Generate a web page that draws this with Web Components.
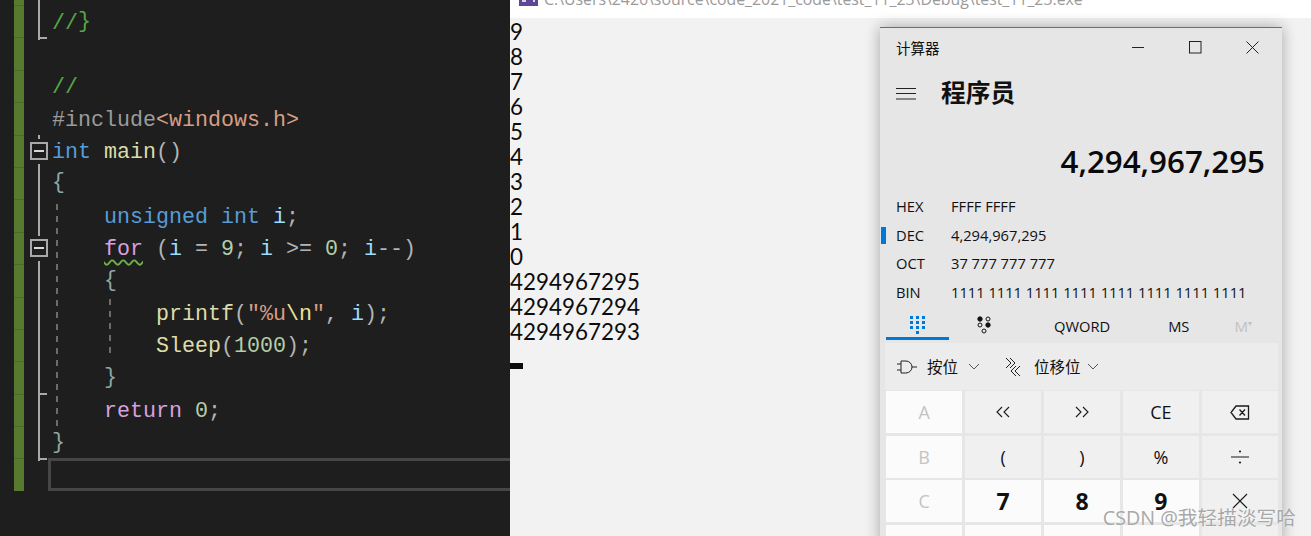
<!DOCTYPE html>
<html lang="zh">
<head>
<meta charset="utf-8">
<title>calc</title>
<style>
  html,body{margin:0;height:100%;overflow:hidden;background:#1e1e1e}
</style>
</head>
<body>
<desk-top>
  <code-editor>
    <code-line fold="line" short></code-line>
    <code-line fold="end"><c-t k="com">//</c-t><c-t k="com" brace>}</c-t></code-line>
    <code-line></code-line>
    <code-line><c-t k="com">//</c-t></code-line>
    <code-line><c-t k="pre">#include</c-t><c-t k="str">&lt;windows.h&gt;</c-t></code-line>
    <code-line fold="box"><c-t k="kw">int</c-t> <c-t k="fn">main</c-t><c-t k="pun">()</c-t></code-line>
    <code-line fold="line"><c-t k="brace" brace>{</c-t></code-line>
    <code-line fold="line">    <c-t k="kw">unsigned</c-t> <c-t k="kw">int</c-t> <c-t k="var">i</c-t><c-t k="pun">;</c-t></code-line>
    <code-line fold="box">    <c-t k="ctl" squiggle>for</c-t><c-t k="pun"> (</c-t><c-t k="var">i</c-t><c-t k="pun"> = </c-t><c-t k="num">9</c-t><c-t k="pun">; </c-t><c-t k="var">i</c-t><c-t k="pun"> &gt;= </c-t><c-t k="num">0</c-t><c-t k="pun">; </c-t><c-t k="var">i</c-t><c-t k="pun">--)</c-t></code-line>
    <code-line fold="line">    <c-t k="brace" brace>{</c-t></code-line>
    <code-line fold="line">        <c-t k="fn">printf</c-t><c-t k="pun">(</c-t><c-t k="str">"%u</c-t><c-t k="esc">\n</c-t><c-t k="str">"</c-t><c-t k="pun">, </c-t><c-t k="var">i</c-t><c-t k="pun">);</c-t></code-line>
    <code-line fold="line">        <c-t k="fn">Sleep</c-t><c-t k="pun">(</c-t><c-t k="num">1000</c-t><c-t k="pun">);</c-t></code-line>
    <code-line fold="end">    <c-t k="brace" brace>}</c-t></code-line>
    <code-line fold="line">    <c-t k="ctl">return</c-t> <c-t k="num">0</c-t><c-t k="pun">;</c-t></code-line>
    <code-line fold="end"><c-t k="brace" brace>}</c-t></code-line>
    <code-line current></code-line>
  </code-editor>
  <console-pane><span slot="title">C:\Users\2426\source\code_2021_code\test_11_23\Debug\test_11_23.exe</span>9
8
7
6
5
4
3
2
1
0
4294967295
4294967294
4294967293</console-pane>
  <calc-window>
    <radix-row slot="radix" name="HEX">FFFF FFFF</radix-row>
    <radix-row slot="radix" name="DEC" active>4,294,967,295</radix-row>
    <radix-row slot="radix" name="OCT">37 777 777 777</radix-row>
    <radix-row slot="radix" name="BIN">1111 1111 1111 1111 1111 1111 1111 1111</radix-row>
    <calc-key kind="off">A</calc-key>
    <calc-key kind="op"><svg width="16" height="12" viewBox="0 0 16 12" fill="none" stroke="#1a1a1a" stroke-width="1.1"><path d="M7 1 2 6l5 5M14 1 9 6l5 5"/></svg></calc-key>
    <calc-key kind="op"><svg width="16" height="12" viewBox="0 0 16 12" fill="none" stroke="#1a1a1a" stroke-width="1.1"><path d="M2 1l5 5-5 5M9 1l5 5-5 5"/></svg></calc-key>
    <calc-key kind="op">CE</calc-key>
    <calc-key kind="op"><svg width="20" height="15" viewBox="0 0 20 15" fill="none" stroke="#1a1a1a" stroke-width="1.3"><path d="M6 1h12.5v13H6L1 7.5zM9.5 4.5l5.5 6M15 4.5l-5.5 6"/></svg></calc-key>
    <calc-key kind="off">B</calc-key>
    <calc-key kind="op">(</calc-key>
    <calc-key kind="op">)</calc-key>
    <calc-key kind="op">%</calc-key>
    <calc-key kind="op"><svg width="18" height="16" viewBox="0 0 18 16" fill="#1a1a1a"><rect y="7.5" width="18" height="1"/><circle cx="9" cy="2.5" r="1.1"/><circle cx="9" cy="13.5" r="1.1"/></svg></calc-key>
    <calc-key kind="off">C</calc-key>
    <calc-key kind="num">7</calc-key>
    <calc-key kind="num">8</calc-key>
    <calc-key kind="num">9</calc-key>
    <calc-key kind="op"><svg width="16" height="16" viewBox="0 0 16 16" fill="none" stroke="#1a1a1a" stroke-width="1.1"><path d="M1 1l14 14M15 1 1 15"/></svg></calc-key>
    <calc-key kind="off"></calc-key>
    <calc-key kind="num"></calc-key>
    <calc-key kind="num"></calc-key>
    <calc-key kind="num"></calc-key>
    <calc-key kind="op"></calc-key>
  </calc-window>
  <water-mark>CSDN @我轻描淡写哈</water-mark>
</desk-top>

<script>
const css = { mono: '"Liberation Mono","DejaVu Sans Mono",monospace', ui: '"Open Sans","Noto Sans CJK SC",sans-serif' };

function shadow(el, html) {
  el.attachShadow({ mode: 'open' }).innerHTML = html;
}

class DeskTop extends HTMLElement {
  connectedCallback() {
    shadow(this, `<style>
      :host{display:flex;position:relative;width:1311px;height:536px;overflow:hidden}
    </style><slot></slot>`);
  }
}

// one coloured run of code
class CT extends HTMLElement {
  connectedCallback() {
    shadow(this, `<style>
      :host{color:#b4b4b4}
      :host([k=com]){color:#57a64a}
      :host([k=pre]){color:#9b9b9b}
      :host([k=str]){color:#d69d85}
      :host([k=esc]){color:#efe29a}
      :host([k=kw]){color:#569cd6}
      :host([k=ctl]){color:#d8a0df}
      :host([k=fn]){color:#dcdcaa}
      :host([k=var]){color:#9cdcfe}
      :host([k=num]){color:#b5cea8}
      :host([k=brace]){color:#8fa6a6}
      :host([brace]){line-height:0;vertical-align:2px}
      :host([squiggle]){text-decoration:underline wavy #6fb04a 1.5px;text-underline-offset:4px}
    </style><slot></slot>`);
  }
}

class CodeEditor extends HTMLElement {
  connectedCallback() {
    shadow(this, `<style>
      :host{display:block;position:relative;flex:none;width:510px;height:536px;overflow:hidden;background:#1e1e1e;
        font:21.67px/32.4px ${css.mono}}
      .guide{position:absolute;width:2px;background:repeating-linear-gradient(#6b6b6b 0 6px,transparent 6px 12px)}
      .g1{left:56px;top:204px;height:225px}
      .g2{left:109px;top:299px;height:58px}
    </style><slot></slot><i class="guide g1"></i><i class="guide g2"></i>`);
  }
}

class CodeLine extends HTMLElement {
  connectedCallback() {
    const fold = this.getAttribute('fold');
    const parts = {
      line: '<i class="v all"></i>',
      end: '<i class="v all"></i><i class="tick"></i>',
      box: '<i class="v top"></i><i class="v low"></i><b class="box"><i></i></b>'
    };
    shadow(this, `<style>
      :host{display:grid;grid-template-columns:14px 10px 28px 1fr;height:32.4px;white-space:pre}
      :host([short]){height:5px}
      .bar{grid-column:2;background:#587a2e;box-shadow:inset 0 1px 0 #4c6a2a}
      :host([short]) .bar{box-shadow:none}
      .fold{grid-column:3;position:relative}
      .v{position:absolute;left:14px;width:2px;background:#a9a9a9}
      .all{top:0;bottom:0}
      .top{top:0;height:4px}
      .low{top:29px;bottom:0}
      .tick{position:absolute;left:14px;bottom:1px;width:9px;height:2px;background:#a9a9a9}
      .box{position:absolute;left:6px;top:7px;width:14px;height:14px;border:2px solid #a9a9a9;display:flex;align-items:center;justify-content:center}
      .box i{width:10px;height:2px;background:#d6d6d6}
      .code{grid-column:4;min-width:0;padding-top:2.5px;box-sizing:border-box}
      :host([current]) .code{margin-left:-4px;margin-right:-20px;border:3px solid #464646;padding-top:0}
    </style><div class="bar"></div><div class="fold">${parts[fold] || ''}</div><div class="code"><slot></slot></div>`);
  }
}

class ConsolePane extends HTMLElement {
  connectedCallback() {
    shadow(this, `<style>
      :host{display:flex;flex-direction:column;flex:1;min-width:0;height:536px;background:#f2f2f2;color:#0c0c0c}
      .title{flex:none;height:18px;background:#fff;overflow:hidden;display:flex;align-items:flex-end;gap:6px;padding-left:9px;
        font:15.85px/24px ${css.ui};color:#9a9a9a;white-space:nowrap}
      .title svg{flex:none;margin-bottom:12px}
      .title div{margin-bottom:7px}
      pre{margin:0;padding-top:1px;font:22.4px/25px Lato,sans-serif}
      .cursor{width:13px;height:6px;background:#0c0c0c;margin-top:19px}
    </style>
    <div class="title"><svg width="19" height="18" viewBox="0 0 19 18"><rect width="19" height="18" fill="#5e4595"/><path d="M3 13h4M9 11h3M14 13h2" stroke="#d9d2e8" stroke-width="2"/></svg><div><slot name="title"></slot></div></div>
    <pre><slot></slot></pre><div class="cursor"></div>`);
  }
}

class RadixRow extends HTMLElement {
  connectedCallback() {
    shadow(this, `<style>
      :host{display:flex;align-items:center;height:28.5px;position:relative;padding-left:16px;font:14.7px/20px ${css.ui};color:#111}
      .n{width:55px}
      :host([active])::before{content:"";position:absolute;left:1px;top:6px;width:5px;height:17px;background:#0078d7}
    </style><span class="n">${this.getAttribute('name')}</span><slot></slot>`);
  }
}

class CalcKey extends HTMLElement {
  connectedCallback() {
    shadow(this, `<style>
      :host{display:flex;align-items:center;justify-content:center;height:42px;background:#f0f0f0;font:18px ${css.ui};color:#111}
      :host([kind=off]){background:#fbfbfb;color:#c4c4c4}
      :host([kind=num]){background:#fbfbfb;font-weight:700;font-size:23px}
    </style><slot></slot>`);
  }
}

class CalcWindow extends HTMLElement {
  connectedCallback() {
    shadow(this, `<style>
      :host{display:block;position:absolute;left:880px;top:27px;width:402px;height:520px;background:#e6e6e6;
        border-top:1px solid #6e6e6e;box-sizing:border-box;box-shadow:0 0 14px rgba(0,0,0,.32);font-family:${css.ui};color:#111}
      .cap{display:flex;align-items:center;height:39px;padding-left:16px;font-size:14.5px}
      .cap span{flex:1}
      .cap i{display:flex;width:57px;justify-content:center;align-items:center}
      .head{display:flex;align-items:center;gap:25px;height:48px;padding-left:16px;font-size:24.7px;font-weight:700;
        font-family:"Noto Sans CJK SC",sans-serif}
      .head svg{margin-top:4px}
      .value{text-align:right;padding:0 17px 0 0;margin-top:24px;height:44px;font-size:31.3px;line-height:44px;font-weight:550;color:#0a0a0a}
      .radix{margin-top:9px}
      .tabs{display:grid;grid-template-columns:63px 71px 1fr;margin-top:6px;height:28px;padding-left:6px;font-size:14.7px;align-items:center}
      .tabs .on{height:28px;display:flex;justify-content:center;box-sizing:border-box;border-bottom:3px solid #0078d7;padding-top:4px}
      .tabs .bits{display:flex;justify-content:center;height:28px;padding-top:4px;box-sizing:border-box}
      .words{display:flex;align-items:center}
      .words b{font-weight:500}
      .ops{margin:3px 4px 0 5px;height:47px;background:#ececec;display:flex;align-items:center;padding-left:12px;font-size:15.5px;gap:5px}
      .ops svg{flex:none}
      .ops .sp{width:15px}
      .keys{display:grid;grid-template-columns:repeat(5,1fr);gap:2.7px;margin:0 4px 0 6px;padding-top:1px}
    </style>
    <div class="cap"><span>计算器</span>
      <i><svg width="13" height="13" viewBox="0 0 13 13"><path d="M0 6.5h12" stroke="#222"/></svg></i>
      <i><svg width="13" height="13" viewBox="0 0 13 13" fill="none"><rect x=".5" y=".5" width="11.5" height="11.5" stroke="#222"/></svg></i>
      <i style="margin-right:1px"><svg width="13" height="13" viewBox="0 0 13 13" fill="none"><path d="M.5.5l12 12M12.5.5l-12 12" stroke="#222"/></svg></i>
    </div>
    <div class="head"><svg width="20" height="13" viewBox="0 0 20 13"><path d="M0 1.5h20M0 6.5h20M0 12h20" stroke="#222"/></svg><span>程序员</span></div>
    <div class="value">4,294,967,295</div>
    <div class="radix"><slot name="radix"></slot></div>
    <div class="tabs">
      <div class="on"><svg width="15" height="18" viewBox="0 0 15 18" fill="#0078d7">
        <path d="M0 0h3v3H0zM6 0h3v3H6zM12 0h3v3h-3zM0 5h3v3H0zM6 5h3v3H6zM12 5h3v3h-3zM0 10h3v3H0zM6 10h3v3H6zM12 10h3v3h-3zM6 15h3v3H6z"/></svg></div>
      <div class="bits"><svg width="15" height="18" viewBox="0 0 15 18" fill="none" stroke="#111"><circle cx="3" cy="3" r="2.2" fill="#111"/><circle cx="11" cy="3" r="2"/><circle cx="3" cy="9" r="2"/><circle cx="11" cy="9" r="2.2" fill="#111"/><circle cx="7" cy="15" r="2"/></svg></div>
      <div class="words"><b style="margin-left:34px">QWORD</b><b style="margin-left:58px">MS</b><b style="margin-left:45px;color:#c2c2c2;font-size:15px">M<sup style="font-size:8px;line-height:0">▾</sup></b></div>
    </div>
    <div class="ops">
      <svg width="20" height="14" viewBox="0 0 20 14" fill="none" stroke="#222"><path d="M0 4h4M0 10h4M4 1h5a6 6 0 0 1 0 12H4zM15 7h5"/></svg>
      <span style="margin-left:5px">按位</span><svg width="12" height="7" viewBox="0 0 12 7" fill="none" stroke="#555" style="margin-left:5px"><path d="M1 1l5 5 5-5"/></svg>
      <span class="sp"></span>
      <svg width="16" height="20" viewBox="0 0 16 20" fill="none" stroke="#222"><path d="M1 1l5 5-5 5M5 1l5 5-5 5M15 9l-5 5 5 5M11 9l-5 5 5 5"/></svg>
      <span style="margin-left:8px">位移位</span><svg width="12" height="7" viewBox="0 0 12 7" fill="none" stroke="#555" style="margin-left:1px"><path d="M1 1l5 5 5-5"/></svg>
    </div>
    <div class="keys"><slot></slot></div>`);
  }
}

class WaterMark extends HTMLElement {
  connectedCallback() {
    shadow(this, `<style>
      :host{position:absolute;right:15px;top:504px;font:19.7px/28px ${css.ui};color:#a8a8a8;white-space:nowrap;
        text-shadow:0 0 2px rgba(255,255,255,.9)}
    </style><slot></slot>`);
  }
}

customElements.define('desk-top', DeskTop);
customElements.define('c-t', CT);
customElements.define('code-editor', CodeEditor);
customElements.define('code-line', CodeLine);
customElements.define('console-pane', ConsolePane);
customElements.define('radix-row', RadixRow);
customElements.define('calc-key', CalcKey);
customElements.define('calc-window', CalcWindow);
customElements.define('water-mark', WaterMark);
</script>
</body>
</html>
